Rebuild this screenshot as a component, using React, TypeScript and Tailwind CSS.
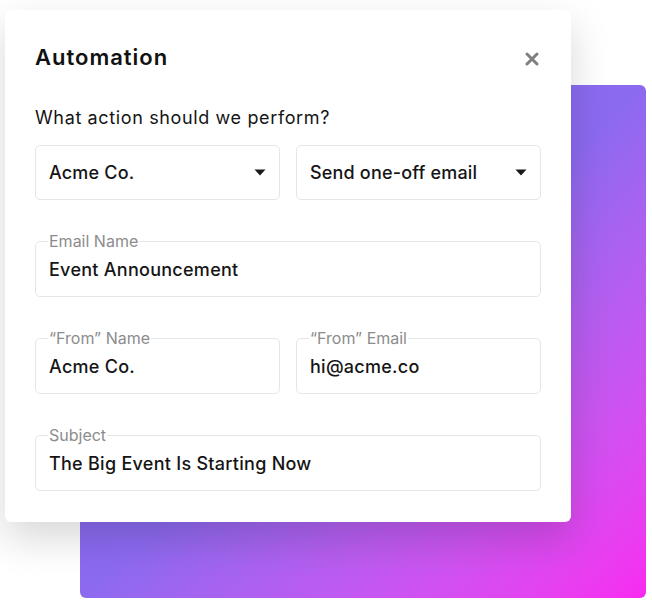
import React from 'react';

const font = { fontFamily: 'Inter, "Noto Sans", sans-serif' };

const Caret = () => (
  <svg width="12" height="7" viewBox="0 0 12 7" className="shrink-0">
    <path d="M0.5 0.5 L11.5 0.5 L6 6.5 Z" fill="#1a1a1a" />
  </svg>
);

const Select = ({ value }: { value: string }) => (
  <div className="flex h-[55px] flex-1 items-center justify-between rounded-[5px] border border-[#e6e6e6] bg-white pl-[13px] pr-[13px]">
    <span className="text-[18px] font-medium leading-6 tracking-[0.01em] text-[#151515]">{value}</span>
    <Caret />
  </div>
);

const Field = ({ label, value }: { label: string; value: string }) => (
  <fieldset className="flex-1 rounded-[5px] border border-[#e6e6e6] pb-[14px] pl-[13px] pr-[13px]">
    <legend className="-ml-[1px] px-[1px] text-[16px] leading-[18px] text-[#8c8c8c]">{label}</legend>
    <div className="pt-[8px] text-[18px] font-medium leading-6 tracking-[0.015em] text-[#151515]">{value}</div>
  </fieldset>
);

export default function App() {
  return (
    <div className="relative h-[601px] w-[652px] overflow-hidden bg-white" style={font}>
      {/* purple backdrop behind the card */}
      <div className="absolute left-[80px] top-[85px] h-[513px] w-[566px] rounded-[6px] bg-linear-to-br from-[#786ff0] via-[#8c6af0] to-[#f829f0]" />

      <div className="relative ml-[5px] mt-[10px] w-[566px] rounded-[6px] bg-white px-[30px] pb-[31px] pt-[33px] shadow-[0_16px_40px_rgba(0,0,0,0.16)]">
        <div className="flex items-center justify-between">
          <h1 className="text-[22px] font-semibold leading-7 tracking-[0.045em] text-[#111]">Automation</h1>
          <svg width="14" height="14" viewBox="0 0 14 14" className="mr-[2px] mt-[4px]">
            <path d="M2 2 L12 12 M12 2 L2 12" stroke="#7f7f7f" strokeWidth="3" strokeLinecap="round" />
          </svg>
        </div>

        <p className="mt-[35px] text-[18px] leading-6 tracking-[0.035em] text-[#151515]">What action should we perform?</p>

        <div className="mt-[15px] flex gap-[16px]">
          <Select value="Acme Co." />
          <Select value="Send one-off email" />
        </div>

        <div className="mt-[32px] flex">
          <Field label="Email Name" value="Event Announcement" />
        </div>

        <div className="mt-[32px] flex gap-[16px]">
          <Field label="“From” Name" value="Acme Co." />
          <Field label="“From” Email" value="hi@acme.co" />
        </div>

        <div className="mt-[32px] flex">
          <Field label="Subject" value="The Big Event Is Starting Now" />
        </div>
      </div>
    </div>
  );
}
